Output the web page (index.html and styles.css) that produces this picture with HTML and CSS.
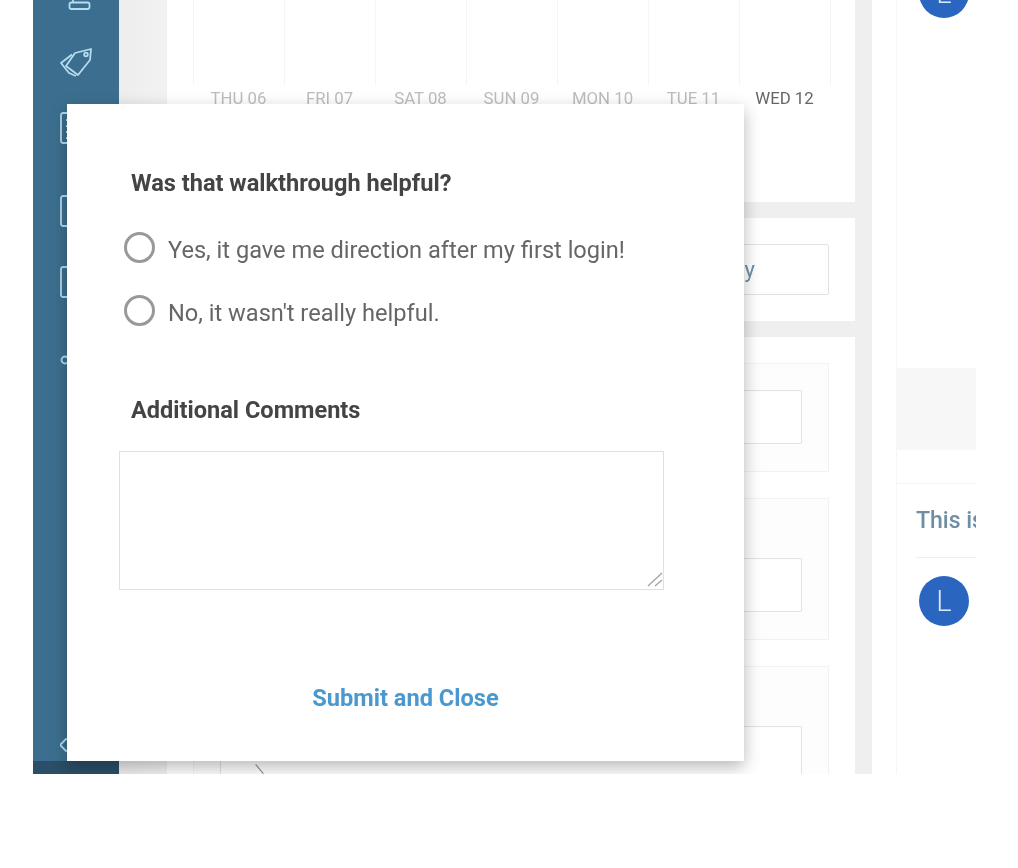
FILE: index.html
```html
<!DOCTYPE html>
<html lang="en">
<head>
<meta charset="utf-8">
<title>Walkthrough feedback</title>
<link rel="stylesheet" href="styles.css">
</head>
<body>
<div class="stage">
  <aside class="sidebar">
    <nav class="nav">
      <svg class="nav-icon" viewBox="0 0 32 32"><rect x="9.500" y="24.500" width="20" height="6.500" rx="2"/><path d="M13 8V24.500"/></svg>
      <svg class="nav-icon" viewBox="0 0 32 32"><path d="M15 7 31 3l-1 11-12 15-12-9z"/><circle cx="26" cy="8.500" r="1.800"/><path d="M12 8.500 1 17l8 10 7 3"/></svg>
      <svg class="nav-icon" viewBox="0 0 32 32"><rect x="1" y="1" width="30" height="30" rx="2"/><path d="M6 8h20M6 14h20M6 20h20M6 26h12"/></svg>
      <svg class="nav-icon" viewBox="0 0 32 32"><rect x="1" y="1" width="30" height="30" rx="2"/><path d="M7 10h18M7 18h18"/></svg>
      <svg class="nav-icon" viewBox="0 0 32 32"><rect x="1" y="1" width="30" height="30" rx="2"/></svg>
      <svg class="nav-icon" viewBox="0 0 32 32"><circle cx="5" cy="16" r="3.500"/></svg>
    </nav>
    <svg class="nav-icon gear" viewBox="0 0 32 32"><path d="M0 16l6-6 4 1v10l-4 1z"/></svg>
    <div class="sidebar-foot"></div>
  </aside>

  <main class="main">
    <section class="card chart-card">
      <div class="chart-grid">
        <span class="chart-col"></span><span class="chart-col"></span><span class="chart-col"></span><span class="chart-col"></span><span class="chart-col"></span><span class="chart-col"></span><span class="chart-col"></span>
      </div>
      <div class="chart-labels">
        <span>THU 06</span><span>FRI 07</span><span>SAT 08</span><span>SUN 09</span><span>MON 10</span><span>TUE 11</span><span class="today">WED 12</span>
      </div>
    </section>
    <section class="card action-card">
      <div class="action-box">Apply</div>
    </section>
    <section class="card form-card">
      <div class="field field-first"><div class="field-input"></div></div>
      <div class="field field-labelled"><div class="field-input"></div></div>
      <div class="field field-labelled field-last"><div class="field-input"><span class="tick"></span></div></div>
    </section>
  </main>

  <aside class="rail">
    <div class="avatar avatar-top">L</div>
    <div class="rail-block"></div>
    <div class="comment">
      <p class="comment-text">This is a comment</p>
      <div class="avatar">L</div>
    </div>
  </aside>

  <form class="modal">
    <h2 class="modal-title">Was that walkthrough helpful?</h2>
    <label class="option option-yes"><input class="radio" type="radio" name="helpful"><span>Yes, it gave me direction after my first login!</span></label>
    <label class="option"><input class="radio" type="radio" name="helpful"><span>No, it wasn't really helpful.</span></label>
    <h2 class="modal-title comments-title">Additional Comments</h2>
    <div class="comments-wrap">
      <textarea class="comments"></textarea>
      <svg class="grip" viewBox="0 0 16 15"><path d="M15 1 1 14M15 8 8 14"/></svg>
    </div>
    <button class="submit" type="button">Submit and Close</button>
  </form>
</div>
</body>
</html>
```

FILE: styles.css
```css
* { box-sizing: border-box; }

html, body { margin: 0; background: #fff; }

body {
  height: 868px;
  overflow: hidden;
  font-family: Roboto, "Liberation Sans", sans-serif;
}

.stage {
  position: relative;
  display: flex;
  width: 943px;
  height: 774px;
  margin-left: 33px;
  overflow: hidden;
  filter: blur(0.7px);
}

/* Sidebar */
.sidebar {
  position: relative;
  flex: 0 0 86px;
  display: flex;
  flex-direction: column;
  background: #3c6f8f;
  overflow: hidden;
}

.nav {
  display: grid;
  grid-template-rows: 68px 68px 64px 102px 40px 116px;
  justify-items: center;
  align-items: center;
  margin-top: -40px;
}

.nav-icon {
  width: 32px;
  height: 32px;
  fill: none;
  stroke: #b5dcef;
  stroke-width: 1.800;
  stroke-linejoin: round;
}

.gear { margin: auto auto 0; }

.sidebar-foot {
  flex: 0 0 13px;
  background: #2b4f68;
}

/* Main column */
.main {
  flex: 0 0 753px;
  display: flex;
  flex-direction: column;
  gap: 16px;
  padding: 0 17px 0 48px;
  background: linear-gradient(90deg, #ededed, #f2f2f2 44px, #efefef 50px);
  overflow: hidden;
}

.card {
  background: #fff;
  padding: 0 26px;
}

.chart-card { flex: 0 0 202px; }

.chart-grid {
  display: grid;
  grid-template-columns: repeat(7, 91px);
  height: 85px;
  border-right: 1px solid #f3f3f3;
  width: 638px;
}

.chart-col { border-left: 1px solid #f5f5f5; }

.chart-labels {
  display: grid;
  grid-template-columns: repeat(7, 91px);
  padding-top: 4px;
  font-size: 16.800px;
  line-height: 18px;
  text-align: center;
  color: #bdbdbd;
}

.today { color: #666; }

.action-card {
  flex: 0 0 103px;
  padding-top: 26px;
}

.action-box {
  height: 51px;
  display: flex;
  align-items: center;
  justify-content: flex-end;
  padding-right: 73px;
  border: 1px solid #e2e2e2;
  border-radius: 2px;
  font-size: 22px;
  color: #6f8ea3;
}

.form-card {
  flex: 1;
  padding-top: 26px;
}

.field {
  border: 1px solid #f2f2f2;
  background: #fdfdfd;
  padding: 26px 26px 27px;
  margin-bottom: 26px;
}

.field-labelled { padding-top: 59px; }

.field-input {
  position: relative;
  height: 54px;
  background: #fff;
  border: 1px solid #e2e2e2;
  border-radius: 2px;
}

.field-last .field-input { height: 70px; }

.tick {
  position: absolute;
  left: 38px;
  top: 36px;
  width: 1px;
  height: 12px;
  background: #888;
  transform: rotate(-40deg);
}

/* Right rail */
.rail {
  flex: 1;
  display: flex;
  flex-direction: column;
  padding-left: 24px;
  background: linear-gradient(90deg, #fff 24px, #f6f6f6 24px, #f6f6f6 25px, #fff 25px);
  overflow: hidden;
}

.avatar {
  flex: none;
  display: flex;
  align-items: center;
  justify-content: center;
  width: 50px;
  height: 50px;
  margin-left: 23px;
  border-radius: 50%;
  background: #2a66c0;
  color: #d9e8fa;
  font-size: 29px;
  font-weight: 300;
}

.avatar-top { margin-top: -32px; }

.rail-block {
  flex: none;
  height: 82px;
  margin-top: 350px;
  background: #f7f7f7;
}

.comment {
  margin-top: 33px;
  border-top: 1px solid #f3f3f3;
  padding-top: 24px;
}

.comment-text {
  margin: 0 0 0 20px;
  padding-bottom: 24px;
  border-bottom: 1px solid #efefef;
  font-size: 23px;
  font-weight: 500;
  line-height: 25px;
  white-space: nowrap;
  color: #6f8ea3;
}

.comment .avatar { margin-top: 18px; }

/* Modal */
.modal {
  position: absolute;
  left: 34px;
  top: 104px;
  width: 677px;
  height: 657px;
  display: flex;
  flex-direction: column;
  align-items: flex-start;
  padding: 65px 0 0 52px;
  background: #fff;
  box-shadow: 0 6px 16px rgba(0, 0, 0, 0.28);
}

.modal-title {
  margin: 0 0 0 12px;
  font-size: 23.550px;
  line-height: 28px;
  font-weight: 700;
  color: #444;
}

.option {
  display: flex;
  align-items: center;
  gap: 13px;
  height: 32px;
  margin: 31px 0 0 5px;
  font-size: 23.600px;
  font-weight: 400;
  color: #666;
}

.option-yes { margin-top: 37px; }

.radio {
  appearance: none;
  width: 31px;
  height: 31px;
  margin: 0 0 6px;
  border: 3px solid #999;
  border-radius: 50%;
  background: #fff;
}

.comments-title { margin-top: 67px; }

.comments-wrap {
  position: relative;
  width: 545px;
  height: 139px;
  margin-top: 27px;
}

.comments {
  display: block;
  width: 100%;
  height: 100%;
  border: 1px solid #e0e0e0;
  background: #fff;
  resize: none;
}

.grip {
  position: absolute;
  right: 1px;
  bottom: 3px;
  width: 16px;
  height: 15px;
  fill: none;
  stroke: #a8a8a8;
  stroke-width: 1.500;
}

.submit {
  align-self: flex-start;
  width: 573px;
  margin-top: 94px;
  padding: 0;
  border: 0;
  background: none;
  font-family: inherit;
  font-size: 23.600px;
  line-height: 28px;
  font-weight: 700;
  text-align: center;
  color: #4a98cf;
}
```
